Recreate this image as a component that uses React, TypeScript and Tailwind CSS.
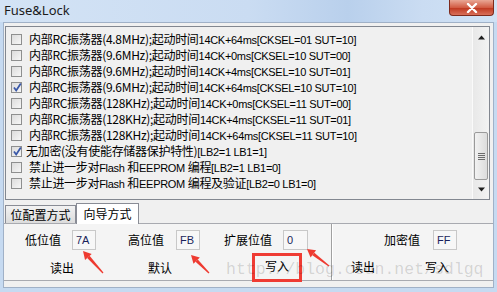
import React from "react";

type Part = [string, boolean];
type Row = {checked: boolean; indent: boolean; parts: Part[]};

const cjk = "font-['Noto_Sans_CJK_SC',sans-serif] text-[12px]";
const small = "font-['Liberation_Sans',Arial,sans-serif] text-[11px] tracking-[-0.3px]";

const rc = (mhz: string, tail: string, checked = false): Row => ({
  checked,
  indent: true,
  parts: [
    [`内部RC振荡器(${mhz});起动时间`, false],
    [tail, true],
  ],
});

const rows: Row[] = [
  rc("4.8MHz", "14CK+64ms[CKSEL=01 SUT=10]"),
  rc("9.6MHz", "14CK+0ms[CKSEL=10 SUT=00]"),
  rc("9.6MHz", "14CK+4ms[CKSEL=10 SUT=01]"),
  rc("9.6MHz", "14CK+64ms[CKSEL=10 SUT=10]", true),
  rc("128KHz", "14CK+0ms[CKSEL=11 SUT=00]"),
  rc("128KHz", "14CK+4ms[CKSEL=11 SUT=01]"),
  rc("128KHz", "14CK+64ms[CKSEL=11 SUT=10]"),
  {
    checked: true,
    indent: false,
    parts: [
      ["无加密(没有使能存储器保护特性)", false],
      ["[LB2=1 LB1=1]", true],
    ],
  },
  {
    checked: false,
    indent: true,
    parts: [
      ["禁止进一步对", false],
      ["Flash\u00a0", true],
      ["和", false],
      ["EEPROM\u00a0", true],
      ["编程", false],
      ["[LB2=1 LB1=0]", true],
    ],
  },
  {
    checked: false,
    indent: true,
    parts: [
      ["禁止进一步对", false],
      ["Flash\u00a0", true],
      ["和", false],
      ["EEPROM\u00a0", true],
      ["编程及验证", false],
      ["[LB2=0 LB1=0]", true],
    ],
  },
];

const CheckBox: React.FC<{checked: boolean}> = ({checked}) => (
  <div className="relative h-[11px] w-[11px] shrink-0 border border-[#8e8f8f] bg-[linear-gradient(135deg,#dcdcdc,#f6f6f6)]">
    {checked && (
      <svg className="absolute left-[0px] top-[-1px]" height="11" viewBox="0 0 11 11" width="11">
        <path d="M2 5.5 L4.2 8.5 L8.8 1.5" fill="none" stroke="#3a58a8" strokeWidth="1.8" />
      </svg>
    )}
  </div>
);

const Field: React.FC<{value: string; className?: string}> = ({value, className}) => (
  <div
    className={`flex h-[20px] w-[24px] shrink-0 items-center border border-[#c8c8c8] bg-[#f7f7f7] pl-[3px] font-['Liberation_Sans',Arial,sans-serif] text-[11px] text-[#1a1f5a] ${className ?? ""}`}
  >
    {value}
  </div>
);

const App: React.FC = () => {
  return (
    <div className="relative flex h-[292px] w-[497px] flex-col overflow-hidden bg-[#c6daf1] px-[3px] pb-[4px]">
      {/* title bar */}
      <div className="-mx-[3px] flex h-[22px] items-start justify-between bg-[linear-gradient(to_right,#d3e3f5_0%,#cadcf2_50%,#b9d0ec_70%,#cadcf2_85%,#d0e2f5_100%)]">
        <span className="ml-[4px] mt-[1px] font-['Noto_Sans',sans-serif] text-[13px] leading-[18px] text-[#1b1b1b]">
          Fuse&amp;Lock
        </span>
        <div className="mr-[3px] flex h-[16px] w-[45px] items-center justify-center rounded-b-[4px] border border-t-0 border-[#7e2a1c] bg-[linear-gradient(#e9a795,#d25c44_50%,#c03a22_55%,#d8705a)]">
          <svg height="10" viewBox="0 0 12 10" width="12">
            <path d="M2 1 L10 9 M10 1 L2 9" stroke="#ffffff" strokeLinecap="round" strokeWidth="2.4" />
          </svg>
        </div>
      </div>

      {/* body */}
      <div className="flex flex-1 flex-col border border-[#a0b1c7] bg-[#f0f0f0]">
        {/* list */}
        <div className="ml-[1px] mr-[3px] mt-[3px] flex h-[174px] border border-[#828790] bg-[#f0f0f0]">
          <div className="flex flex-1 flex-col pt-[4px]">
            {rows.map((row, i) => (
              <div key={i} className="flex h-[16px] items-center whitespace-nowrap pl-[5px] text-black">
                <CheckBox checked={row.checked} />
                <div className={`flex items-baseline ${row.indent ? "ml-[7px]" : "ml-[4px]"}`}>
                  {row.parts.map(([text, isSmall], j) => (
                    <span
                      key={j}
                      className={`${isSmall ? small : `${cjk} tracking-[-0.3px]`} leading-[16px]`}
                    >
                      {text}
                    </span>
                  ))}
                </div>
              </div>
            ))}
          </div>
          {/* scrollbar */}
          <div className="flex w-[17px] flex-col border-l border-[#fafafa] bg-[linear-gradient(to_right,#e8e8e8,#f3f3f3)]">
            <div className="flex h-[17px] items-center justify-center pt-[3px]">
              <svg height="5" viewBox="0 0 7 4" width="7">
                <path d="M0 4 L3.5 0 L7 4 Z" fill="#1f1f1f" />
              </svg>
            </div>
            <div className="mx-[1px] mt-[88px] flex h-[48px] items-center justify-center rounded-[2px] border border-[#9a9a9a] bg-[linear-gradient(to_right,#f2f2f2,#dcdcdc)]">
              <div className="flex flex-col gap-[1px]">
                <div className="h-px w-[7px] bg-[#6c6c6c]" />
                <div className="h-px w-[7px] bg-[#6c6c6c]" />
                <div className="h-px w-[7px] bg-[#6c6c6c]" />
                <div className="h-px w-[7px] bg-[#6c6c6c]" />
              </div>
            </div>
            <div className="mt-auto flex h-[17px] items-center justify-center pb-[2px]">
              <svg height="5" viewBox="0 0 7 4" width="7">
                <path d="M0 0 L3.5 4 L7 0 Z" fill="#1f1f1f" />
              </svg>
            </div>
          </div>
        </div>

        {/* tabs */}
        <div className={`ml-[1px] mt-[3px] flex h-[20px] items-end ${cjk}`}>
          <div className="flex h-[18px] w-[71px] items-center justify-center border border-b-0 border-[#898c95] bg-[linear-gradient(#f2f2f2,#dcdcdc)] leading-[16px]">
            位配置方式
          </div>
          <div className="relative z-10 -mb-px flex h-[21px] w-[63px] items-center justify-center border border-b-0 border-[#898c95] bg-white leading-[16px]">
            向导方式
          </div>
        </div>

        {/* panel */}
        <div className={`flex h-[58px] border-y border-[#a8aab0] bg-[#f4f4f4] text-black ${cjk}`}>
          <div className="flex w-[327px] flex-col">
            <div className="mt-[6px] flex h-[20px] items-center">
              <span className="ml-[21px] w-[36px] leading-[16px]">低位值</span>
              <Field className="ml-[11px]" value="7A" />
              <span className="ml-[32px] w-[36px] leading-[16px]">高位值</span>
              <Field className="ml-[12px]" value="FB" />
              <span className="ml-[24px] w-[48px] leading-[16px]">扩展位值</span>
              <Field className="ml-[11px] w-[25px]" value="0" />
            </div>
            <div className="mt-[3px] flex h-[29px] items-center">
              <span className="ml-[46px] w-[24px] leading-[16px]">读出</span>
              <span className="ml-[74px] w-[24px] leading-[16px]">默认</span>
              <div className="ml-[80px] flex h-[29px] w-[50px] items-center justify-center border-[3px] border-[#ef3b33] pb-[4px] leading-[16px]">
                写入
              </div>
            </div>
          </div>
          <div className="w-[2px] border-l border-r border-l-[#a0a0a0] border-r-white" />
          <div className="flex flex-1 flex-col">
            <div className="mt-[6px] flex h-[20px] items-center">
              <span className="ml-[51px] w-[36px] leading-[16px]">加密值</span>
              <Field className="ml-[13px]" value="FF" />
            </div>
            <div className="mt-[3px] flex h-[29px] items-center">
              <span className="ml-[18px] w-[24px] leading-[16px]">读出</span>
              <span className="ml-[50px] w-[24px] leading-[16px]">写入</span>
            </div>
          </div>
        </div>
      </div>

      {/* watermark */}
      <div className="pointer-events-none absolute left-[226px] top-[260px] font-['Liberation_Mono',monospace] text-[16.5px] leading-[20px] text-black/15">
        http://blog.csdn.net/sdlgq
      </div>

      {/* annotation arrows */}
      <svg className="pointer-events-none absolute left-0 top-0" height="292" viewBox="0 0 497 292" width="497">
        {[
          [103, 273, 83, 251],
          [209, 273, 191, 255],
          [329, 266, 307, 249],
        ].map(([x1, y1, x2, y2], i) => {
          const dx = x2 - x1;
          const dy = y2 - y1;
          const len = Math.hypot(dx, dy);
          const ux = dx / len;
          const uy = dy / len;
          const px = -uy;
          const py = ux;
          const bx = x2 - ux * 8;
          const by = y2 - uy * 8;
          const head = `${x2},${y2} ${bx + px * 4.5},${by + py * 4.5} ${bx - px * 4.5},${by - py * 4.5}`;
          const shaft = `${x1 + px * 0.6},${y1 + py * 0.6} ${bx + px * 1.6},${by + py * 1.6} ${bx - px * 1.6},${by - py * 1.6} ${x1 - px * 0.6},${y1 - py * 0.6}`;

          return (
            <g key={i} fill="#ee3a30">
              <polygon points={shaft} />
              <polygon points={head} />
            </g>
          );
        })}
      </svg>
    </div>
  );
};

export default App;
